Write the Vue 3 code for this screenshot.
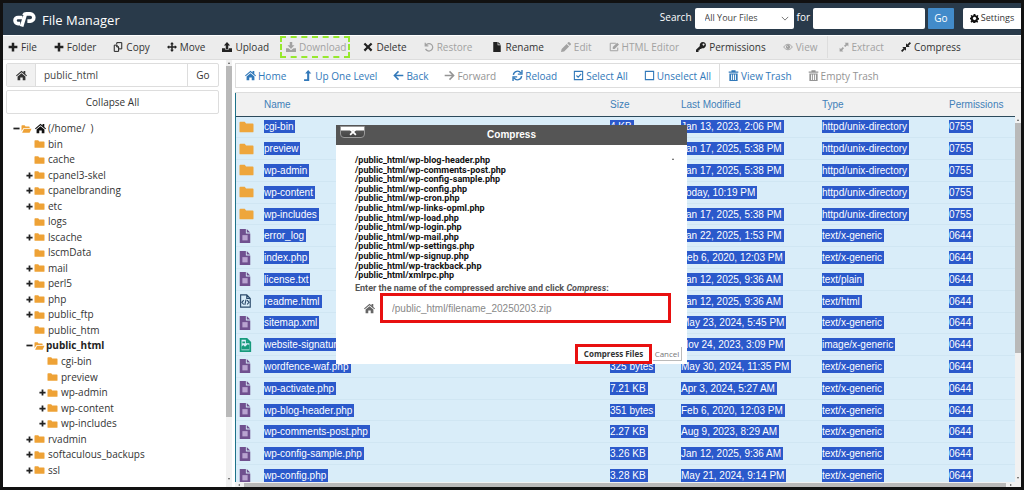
<script setup>
import { h } from 'vue'

const shapes = {
  plus: [{ d: 'M6 1h4v5h5v4h-5v5H6v-5H1V6h5z' }],
  minus: [{ d: 'M1 6h14v4H1z' }],
  copy: [{ d: 'M6 4V1h8v10H9M2 5h4l3 3v7H2zM6 5v3h3', s: 1.6 }],
  move: [{ d: 'M8 0l3 3.5H9.2v3.3h3.3V5L16 8l-3.500 3V9.200H9.200v3.300H11L8 16l-3-3.500h1.800V9.200H3.500V11L0 8l3.500-3v1.800h3.300V3.500H5z' }],
  upload: [{ d: 'M8 0l5 5.500h-3V11H6V5.500H3zM0 10h5v2h6v-2h5v6H0z' }],
  download: [{ d: 'M6 0h4v5h3.500L8 11 2.500 5H6zM0 10h4l4 3 4-3h4v6H0z' }],
  times: [{ d: 'M3.500 1L8 5.500 12.500 1 15 3.500 10.500 8l4.500 4.500-2.500 2.500L8 10.500 3.500 15 1 12.500 5.500 8 1 3.500z' }],
  undo: [{ d: 'M3 5a6 6 0 1 1-.5 6M2 1v5h5', s: 2 }],
  file: [{ d: 'M2 0h7v5h5v11H2zM10 0l4 4h-4z' }],
  pencil: [{ d: 'M0 16l1-5 8-8 4 4-8 8zM10 2l1.500-1.500q1-1 2 0l2 2q1 1 0 2L14 6z' }],
  edit: [{ d: 'M11 2H2v12h12V9', s: 1.6 }, { d: 'M6 11V8l7-7 3 3-7 7z' }],
  key: [{ d: 'M11 0a5 5 0 1 1-1.500 9.800L8 11H6v2H4v3H0v-3.500L6.200 6.400A5 5 0 0 1 11 0zM12 2.500a1.500 1.500 0 1 0 .1 0z' }],
  eye: [{ d: 'M1 8q7-9 14 0-7 9-14 0z', s: 1.5 }, { d: 'M8 4.500a3.500 3.500 0 1 0 .1 0zM8 6v1.500H6.500Q6.600 6 8 6z' }],
  expand: [{ d: 'M9 1h6v6l-2-2-3 3-2-2 3-3zM1 15V9l2 2 3-3 2 2-3 3 2 2z' }],
  compress: [{ d: 'M8 8V2l2 2 4-4 2 2-4 4 2 2zM8 8v6l-2-2-4 4-2-2 4-4-2-2z' }],
  home: [{ d: 'M0 8l8-7 3 2.600V1.500h2.500v4.300L16 8l-1 1.200L8 3.300 1 9.200zM2.300 9.500L8 4.700l5.700 4.800V15H9.800v-4H6.200v4H2.300z' }],
  up: [{ d: 'M9 0l4.500 5h-3v11H3v-2.500h4.500V5h-3z' }],
  left: [{ d: 'M8 2L2 8l6 6M2 8h13', s: 2.2 }],
  right: [{ d: 'M8 2l6 6-6 6M14 8H1', s: 2.2 }],
  reload: [{ d: 'M2 7a6 6 0 0 1 11-2.500M14.500 0v6h-6M14 9a6 6 0 0 1-11 2.500M1.500 16v-6h6', s: 2 }],
  checked: [{ d: 'M2 2h12v12H2zM5 8l2.500 2.500L12 5.500', s: 1.6 }],
  square: [{ d: 'M2 2h12v12H2z', s: 1.6 }],
  trash: [{ d: 'M5 2V.5h6V2h4v2H1V2zM2 5h12v11H2zM4.500 6.500v8H6v-8zM7.300 6.500v8h1.400v-8zM10 6.500v8h1.500v-8z' }],
  gear: [{ d: 'M6.500 0h3l.4 2.200 1.600.7L13.400 1.600l1.600 1.600-1.100 1.900.6 1.400 1.500.5v3l-2 .4-.6 1.500 1.100 1.900-1.600 1.600-1.900-1.200-1.500.7-.4 2h-3l-.4-2-1.500-.7-1.900 1.200L1 13.300l1.200-1.900-.7-1.500L0 9.500v-3l1.700-.4.6-1.400L1 3.200l1.600-1.600 1.900 1.300 1.600-.7zM8 5a3 3 0 1 0 .1 0z' }],
  folder: [{ d: 'M0 3q0-1 1-1h5l1.500 2H15q1 0 1 1v8q0 1-1 1H1q-1 0-1-1z' }],
  open: [{ d: 'M0 11V3q0-1 1-1h4l1.500 2H12q1 0 1 1v1.500H3.500zM4 7.500h12L13 14H1z' }],
  doc: [{ d: 'M2 0h7v5h5v11H2zM10 0l4 4h-4z' }, { d: 'M5 7h6v6H5z', c: '#b9a3d0' }],
  code: [{ d: 'M3 1h7l4 4v10H3zM10 1v4h4M6.500 7l-2 2.500 2 2.500M10.500 7l2 2.500-2 2.500M9.200 6.500l-1.400 6', s: 1.3 }],
  image: [{ d: 'M3 1h7l4 4v10H3zM10 1v4h4', s: 2 }, { d: 'M4 13v-3l2-2 2 2 3-3 2 1v5zM5 4h3v2H5z' }]
}

const Icon = (props) =>
  h('svg', { viewBox: '0 0 16 16', 'aria-hidden': 'true' },
    shapes[props.name].map((p) => h('path', {
      d: p.d,
      fill: p.s ? 'none' : p.c || 'currentColor',
      'fill-rule': 'evenodd',
      stroke: p.s ? 'currentColor' : 'none',
      'stroke-width': p.s
    })))
Icon.props = ['name']

const tools = [
  ['plus', 'File'], ['plus', 'Folder'], ['copy', 'Copy'], ['move', 'Move'], ['upload', 'Upload'],
  ['download', 'Download', 'off marked'], ['times', 'Delete'], ['undo', 'Restore', 'off'],
  ['file', 'Rename', 'wide'], ['pencil', 'Edit', 'off'], ['edit', 'HTML Editor', 'off'],
  ['key', 'Permissions'], ['eye', 'View', 'off'], ['expand', 'Extract', 'off divided'], ['compress', 'Compress']
]
const nav = [
  ['home', 'Home'], ['up', 'Up One Level'], ['left', 'Back'], ['right', 'Forward', 'off'],
  ['reload', 'Reload'], ['checked', 'Select All'], ['square', 'Unselect All'],
  ['trash', 'View Trash', 'divided'], ['trash', 'Empty Trash', 'off']
]
const tree = [
  ['bin', 1, ''], ['cache', 1, ''], ['cpanel3-skel', 1, 'plus'], ['cpanelbranding', 1, 'plus'],
  ['etc', 1, 'plus'], ['logs', 1, ''], ['lscache', 1, 'plus'], ['lscmData', 1, ''], ['mail', 1, 'plus'],
  ['perl5', 1, 'plus'], ['php', 1, 'plus'], ['public_ftp', 1, 'plus'], ['public_htm', 1, ''],
  ['public_html', 1, 'minus'], ['cgi-bin', 2, ''], ['preview', 2, ''], ['wp-admin', 2, 'plus'],
  ['wp-content', 2, 'plus'], ['wp-includes', 2, 'plus'], ['rvadmin', 1, 'plus'],
  ['softaculous_backups', 1, 'plus'], ['ssl', 1, 'plus']
]
const dir = 'httpd/unix-directory'
const txt = 'text/x-generic'
const files = [
  ['folder', 'cgi-bin', '4 KB', 'Jan 13, 2023, 2:06 PM', dir, '0755'],
  ['folder', 'preview', '4 KB', 'Jan 17, 2025, 5:38 PM', dir, '0755'],
  ['folder', 'wp-admin', '4 KB', 'Jan 17, 2025, 5:38 PM', dir, '0755'],
  ['folder', 'wp-content', '4 KB', 'Today, 10:19 PM', dir, '0755'],
  ['folder', 'wp-includes', '4 KB', 'Jan 17, 2025, 5:38 PM', dir, '0755'],
  ['doc', 'error_log', '4 KB', 'Jan 22, 2025, 1:53 PM', txt, '0644'],
  ['doc', 'index.php', '4 KB', 'Feb 6, 2020, 12:03 PM', txt, '0644'],
  ['doc', 'license.txt', '4 KB', 'Jan 12, 2025, 9:36 AM', 'text/plain', '0644'],
  ['code', 'readme.html', '4 KB', 'Jan 12, 2025, 9:36 AM', 'text/html', '0644'],
  ['doc', 'sitemap.xml', '4 KB', 'May 23, 2024, 5:45 PM', txt, '0644'],
  ['image', 'website-signature', '4 KB', 'Nov 24, 2023, 3:09 PM', 'image/x-generic', '0644'],
  ['doc', 'wordfence-waf.php', '325 bytes', 'May 30, 2024, 11:35 PM', txt, '0644'],
  ['doc', 'wp-activate.php', '7.21 KB', 'Apr 3, 2024, 5:27 AM', txt, '0644'],
  ['doc', 'wp-blog-header.php', '351 bytes', 'Feb 6, 2020, 12:03 PM', txt, '0644'],
  ['doc', 'wp-comments-post.php', '2.27 KB', 'Aug 9, 2023, 8:29 AM', txt, '0644'],
  ['doc', 'wp-config-sample.php', '3.26 KB', 'Jan 12, 2025, 9:36 AM', txt, '0644'],
  ['doc', 'wp-config.php', '3.28 KB', 'May 21, 2024, 9:14 PM', txt, '0644']
]
const archive = [
  'wp-blog-header', 'wp-comments-post', 'wp-config-sample', 'wp-config', 'wp-cron', 'wp-links-opml',
  'wp-load', 'wp-login', 'wp-mail', 'wp-settings', 'wp-signup', 'wp-trackback', 'xmlrpc'
]
</script>

<template>
  <div class="app">
    <header class="top">
      <svg class="logo" viewBox="0 0 64 44" aria-hidden="true">
        <path d="M26 15H14a8 8 0 0 0 0 17h6M35 4L24 40M30 9q2-4 7-4h11a9 9 0 0 1 0 20H40" fill="none" stroke="#fff" stroke-width="10" />
      </svg>
      <h1>File Manager</h1>
      <form class="search" @submit.prevent>
        <label for="scope">Search</label>
        <span class="select">
          <select id="scope"><option>All Your Files</option></select>
          <svg viewBox="0 0 10 6" aria-hidden="true"><path d="M1 1l4 4 4-4" fill="none" stroke="#555" /></svg>
        </span>
        <label for="term">for</label>
        <input id="term" type="text">
        <button class="go">Go</button>
      </form>
      <button class="settings"><Icon name="gear" />Settings</button>
    </header>

    <div class="toolbar">
      <button v-for="t in tools" :key="t[1]" :class="t[2]"><Icon :name="t[0]" /><span>{{ t[1] }}</span></button>
    </div>

    <main>
      <aside>
        <div class="side">
          <form class="path" @submit.prevent>
            <button class="root" aria-label="Home directory"><Icon name="home" /></button>
            <input type="text" value="public_html" aria-label="Path">
            <button class="pathgo">Go</button>
          </form>
          <button class="collapse">Collapse All</button>
          <ul class="tree">
            <li class="level0">
              <Icon class="sign" name="minus" /><Icon class="fold" name="open" /><Icon class="house" name="home" />
              <span>(/home/&nbsp; )</span>
            </li>
            <li v-for="n in tree" :key="n[0]" :class="['level' + n[1], { current: n[2] === 'minus' }]">
              <Icon v-if="n[2]" class="sign" :name="n[2]" /><i v-else class="sign"></i>
              <Icon class="fold" :name="n[2] === 'minus' ? 'open' : 'folder'" />
              <span>{{ n[0] }}</span>
            </li>
          </ul>
        </div>
        <div class="vbar side-bar"><b class="arrow up"></b><i class="thumb"></i><b class="arrow down"></b></div>
      </aside>

      <section class="pane">
        <nav>
          <button v-for="n in nav" :key="n[1]" :class="n[2]"><Icon :name="n[0]" /><span>{{ n[1] }}</span></button>
        </nav>
        <div class="listing">
          <div class="grid">
            <table>
              <colgroup><col class="c-icon"><col><col class="c-size"><col class="c-date"><col class="c-type"><col class="c-perm"></colgroup>
              <thead>
                <tr><th></th><th>Name</th><th>Size</th><th>Last Modified</th><th>Type</th><th>Permissions</th></tr>
              </thead>
              <tbody>
                <tr v-for="f in files" :key="f[1]">
                  <td><Icon :name="f[0]" :class="['kind', f[0]]" /></td>
                  <td v-for="k in 5" :key="k"><span>{{ f[k] }}</span></td>
                </tr>
              </tbody>
            </table>
          </div>
          <div class="vbar list-bar"><b class="arrow up"></b><i class="thumb"></i><b class="arrow down"></b></div>
        </div>
        <div class="hbar"><b class="arrow back"></b><i></i><b class="arrow next"></b></div>
      </section>
    </main>

    <div class="dialog" role="dialog" aria-labelledby="dialog-title">
      <div class="title">
        <button class="close" aria-label="Close"><Icon name="times" /></button>
        <h2 id="dialog-title">Compress</h2>
      </div>
      <div class="body">
        <div class="chosen">
          <ul><li v-for="a in archive" :key="a">/public_html/{{ a }}.php</li></ul>
          <b class="arrow up"></b>
        </div>
        <label for="archive">Enter the name of the compressed archive and click <em>Compress</em>:</label>
        <div class="field">
          <Icon name="home" />
          <input id="archive" type="text" value="/public_html/filename_20250203.zip">
        </div>
        <div class="actions">
          <button class="confirm">Compress Files</button>
          <button class="cancel">Cancel</button>
        </div>
      </div>
    </div>
  </div>
</template>

<style>
body { margin: 0; background: #111; }
</style>

<style scoped>
* { box-sizing: border-box; }
.app {
  position: relative;
  display: flex;
  flex-direction: column;
  height: 100vh;
  overflow: hidden;
  padding: 3px;
  background: #111;
  color: #333;
  font: 10px/14px "Open Sans", "Noto Sans", sans-serif;
}
button, input, select {
  margin: 0;
  padding: 0;
  border: 0;
  border-radius: 0;
  background: none;
  color: inherit;
  font: inherit;
}
input { min-width: 0; }
ul { margin: 0; padding: 0; list-style: none; }
svg { display: block; flex: none; }

.top {
  display: flex;
  align-items: center;
  flex: none;
  height: 32px;
  padding-left: 10px;
  background: #293a4a;
  color: #fff;
}
.logo { width: 23px; height: 16px; margin-top: 2px; }
h1 { flex: 1; margin: 2px 0 0 6px; font-size: 13px; line-height: 18px; font-weight: 400; }
.search { display: flex; align-items: center; gap: 3px; margin-bottom: 2px; }
.search label { margin-bottom: 2px; }
.select { position: relative; }
.select select {
  width: 99px;
  height: 21px;
  padding-left: 10px;
  border-radius: 2px;
  background: #fff;
  color: #444;
  font-size: 9px;
  appearance: none;
}
.select svg { position: absolute; right: 5px; top: 8px; width: 8px; height: 5px; }
.search input { width: 112px; height: 21px; border-radius: 2px; background: #fff; color: #333; }
.go { width: 26px; height: 21px; background: #428bca; border-radius: 1px; }
.settings {
  display: flex;
  align-items: center;
  justify-content: center;
  gap: 2px;
  width: 58px;
  height: 21px;
  margin: 0 0 2px 9px;
  border-radius: 2px 0 0 2px;
  background: #fff;
  color: #333;
  font-size: 9px;
}
.settings svg { width: 9px; height: 9px; color: #111; }

.toolbar {
  display: flex;
  align-items: center;
  flex: none;
  height: 25px;
  padding-bottom: 2px;
  border-top: 1px solid #fff;
  border-bottom: 1px solid #ddd;
  background: #ececec;
}
.toolbar button, nav button {
  display: flex;
  align-items: center;
  gap: 3px;
  height: 22px;
  padding: 0 12px 0 5px;
  white-space: nowrap;
}
.toolbar svg { width: 10px; height: 10px; color: #222; }
.toolbar .off, .toolbar .off svg { color: #a2a2a2; }
.toolbar .marked { padding: 0 2px 0 4px; margin: 0 8px 0 -1px; border: 2px dashed #96e82e; }
.toolbar .wide { margin-left: 3px; }
.toolbar .divided { border-left: 1px solid #ddd; padding-left: 11px; margin-left: -3px; }

main { display: flex; flex: 1; min-height: 0; background: #fff; }
aside { display: flex; flex: none; width: 229px; }
.side { display: flex; flex-direction: column; flex: 1; padding: 3px 7px 9px 3px; }
.path { display: flex; flex: none; height: 24px; border: 1px solid #ddd; border-radius: 2px; }
.path input { flex: 1; padding-left: 8px; border: solid #ddd; border-width: 0 1px; color: #444; }
.root { display: grid; place-items: center; width: 28px; background: #f1f1f1; }
.root svg { width: 11px; height: 11px; }
.pathgo { width: 30px; }
.collapse { flex: none; height: 24px; margin-top: 3px; border: 1px solid #ddd; border-radius: 2px; }
.tree { display: flex; flex-direction: column; flex: 1; margin-top: 7px; }
.tree li { display: flex; align-items: center; flex: 1; line-height: 15px; min-height: 0; }
.tree .level0 { padding-left: 7px; }
.tree .level1 { padding-left: 20px; }
.tree .level2 { padding-left: 33px; }
.sign { width: 7px; height: 7px; margin-right: 1px; color: #222; }
.fold { width: 11px; height: 10px; margin-right: 3px; color: #eea236; }
.house { width: 11px; height: 11px; margin-right: 2px; color: #111; }
.current { font-weight: 700; color: #222; }
.current .fold { margin-right: 1px; }

.vbar { display: flex; flex-direction: column; align-items: center; flex: none; width: 6px; background: #f1f1f1; }
.thumb { width: 100%; background: #b9b9b9; }
.arrow { width: 0; height: 0; border: 1px solid transparent; }
.up { border-bottom: 2px solid #555; border-top: 0; }
.down { border-top: 2px solid #555; border-bottom: 0; margin-top: auto; }
.back { border-right: 2px solid #555; border-left: 0; }
.next { border-left: 2px solid #555; border-right: 0; }
.side-bar { padding: 2px 0 7px; }
.side-bar .thumb { height: 84%; margin-top: 2px; }

.pane { display: flex; flex-direction: column; flex: 1; min-width: 0; padding: 3px 0 0 3px; }
nav { display: flex; align-items: center; flex: none; height: 25px; border: 1px solid #ddd; border-right: 0; color: #3178b9; }
nav button { gap: 2px; padding: 0 8px; }
nav button:first-child { padding-left: 9px; }
nav svg { width: 11px; height: 11px; }
nav .off { color: #949494; }
nav .divided { height: 23px; border-left: 1px solid #ddd; }

.listing {
  display: flex;
  flex: 1;
  min-height: 0;
  margin-top: 4px;
  border-top: 1px solid #ddd;
  background: #f1f1f1;
}
.grid { flex: 1; min-width: 0; overflow: hidden; border-left: 1px solid #1d7289; background: #f1f1f1; }
table {
  width: 100%;
  height: calc(100% + 5px);
  table-layout: fixed;
  border-collapse: collapse;
  font-family: "Liberation Sans", Arial, sans-serif;
  line-height: 13px;
}
.c-icon { width: 28px; }
.c-size { width: 71px; }
.c-date { width: 141px; }
.c-type { width: 127px; }
.c-perm { width: 66px; }
th { height: 23px; padding: 0; text-align: left; font-weight: 400; color: #3f80b8; border-bottom: 1px solid #2c4a5c; }
td { padding: 0; white-space: nowrap; vertical-align: middle; background: #d9edf9; border-bottom: 1px solid #d0e6f3; }
td span { display: inline-block; padding-right: 2px; background: #2b59cb; color: #fff; }
.kind { width: 14px; height: 14px; margin-left: 2px; }
.kind.folder { width: 15px; margin-left: 3px; color: #eea63c; }
.kind.doc { color: #70508f; }
.kind.code { color: #2b4a6b; }
.kind.image { color: #169a7c; }
.list-bar { margin-top: 23px; padding: 3px 0; }
.list-bar .thumb { height: 64%; margin-top: 2px; }
.hbar { display: flex; align-items: center; flex: none; height: 5px; padding: 0 9px 0 3px; background: #f1f1f1; }
.hbar i { flex: 1; height: 4px; margin: 0 4px; background: #b9b9b9; }

.dialog {
  position: absolute;
  top: 125px;
  left: 336px;
  width: 351px;
  background: #fff;
  font-family: "Liberation Sans", Arial, sans-serif;
}
.title { position: relative; height: 20px; background: #555; color: #fff; }
h2 { margin: 0; font-size: 10px; line-height: 20px; text-align: center; }
.close {
  position: absolute;
  top: 1px;
  left: 4px;
  display: grid;
  place-items: center;
  width: 25px;
  height: 12px;
  border: 1px solid #999;
  border-radius: 0 0 4px 4px;
  background: linear-gradient(#fff 30%, #555 40%, #444);
}
.close svg { width: 8px; height: 8px; }
.body { padding: 10px 5px 0 19px; }
.chosen { display: flex; justify-content: space-between; padding-right: 8px; }
.chosen ul { display: flex; flex-direction: column; height: 125px; }
.chosen li { flex: 1; min-height: 0; font-family: Roboto, sans-serif; font-size: 9px; line-height: 10px; font-weight: 700; color: #111; }
.chosen .arrow { margin-top: 3px; }
.body label { display: block; height: 13px; font-family: Roboto, sans-serif; font-size: 9px; line-height: 16px; font-weight: 700; color: #555; }
.field { display: flex; align-items: center; gap: 5px; padding: 0 11px 0 9px; }
.field svg { width: 11px; height: 11px; color: #666; }
.field input { flex: 1; height: 30px; padding-left: 9px; border: 3px solid #e81010; color: #888; }
.actions { display: flex; justify-content: flex-end; align-items: center; gap: 1px; margin-top: 21px; font-family: "Open Sans", sans-serif; }
.confirm { width: 77px; height: 20px; border: 3px solid #e81010; font-size: 8px; line-height: 12px; font-weight: 700; }
.cancel { width: 29px; height: 14px; border: solid #bbb; border-width: 0 1px 1px 0; font-size: 8px; line-height: 12px; color: #777; }
</style>
